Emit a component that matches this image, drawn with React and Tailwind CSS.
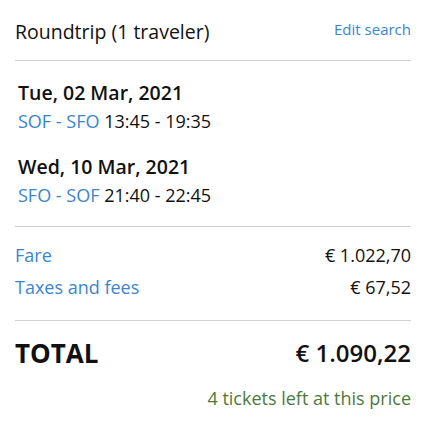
const FONT = { fontFamily: '"Open Sans", "Noto Sans", sans-serif' };

const LEGS = [
  { date: "Tue, 02 Mar, 2021", route: "SOF - SFO", time: "13:45 - 19:35" },
  { date: "Wed, 10 Mar, 2021", route: "SFO - SOF", time: "21:40 - 22:45" },
];

export default function App() {
  return (
    <div className="w-[426px] h-[425px] bg-white text-[#111]" style={FONT}>
      <div className="px-[15px] pt-[18px]">
        <div className="flex items-start justify-between pb-[14px] border-b border-[#d0d0d0]">
          <h2 className="text-[19.5px] leading-[28px]">Roundtrip (1 traveler)</h2>
          <a className="text-[15px] leading-[22px] text-[#3a85cf]">Edit search</a>
        </div>

        <div className="px-[3px] pt-[18px] pb-[17px] border-b border-[#d0d0d0] flex flex-col gap-[18px]">
          {LEGS.map((leg, i) => (
            <div key={i}>
              <p className="text-[19.5px] leading-[28px] font-semibold">{leg.date}</p>
              <p className="text-[18px] leading-[27px] mt-[1px]">
                <span className="text-[#3a85cf]">{leg.route}</span> {leg.time}
              </p>
            </div>
          ))}
        </div>

        <div className="pt-[15px] pb-[19px] border-b border-[#d0d0d0] text-[18px] leading-[27px] flex flex-col gap-[5px]">
          <div className="flex justify-between">
            <span className="text-[#3a85cf]">Fare</span>
            <span>€ 1.022,70</span>
          </div>
          <div className="flex justify-between">
            <span className="text-[#3a85cf]">Taxes and fees</span>
            <span>€ 67,52</span>
          </div>
        </div>

        <div className="flex justify-between items-center pt-[15px] leading-[34px]">
          <span className="font-bold text-[26px]">TOTAL</span>
          <span className="font-semibold text-[24px]">€ 1.090,22</span>
        </div>
        <p className="text-right text-[18px] leading-[27px] mt-[15px] text-[#4d7a3c]">4 tickets left at this price</p>
      </div>
    </div>
  );
}
